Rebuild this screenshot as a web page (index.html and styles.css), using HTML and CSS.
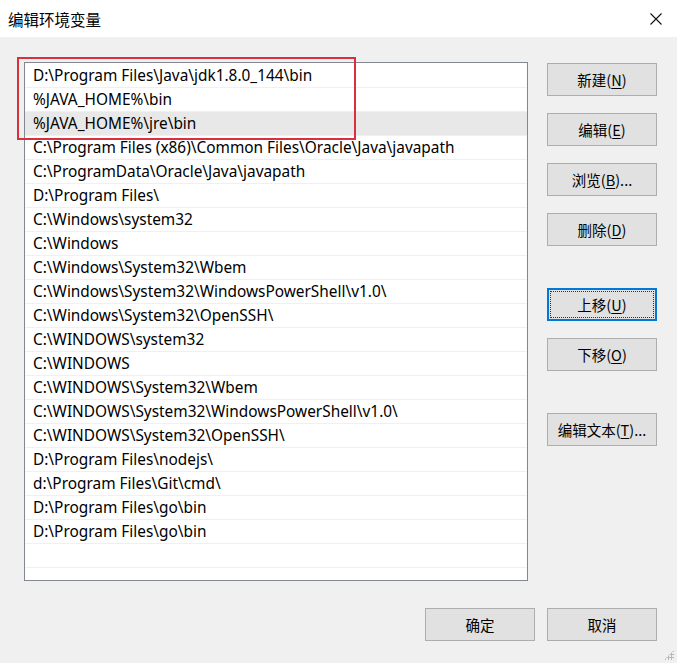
FILE: index.html
```html
<!DOCTYPE html>
<html lang="zh-CN">
<head>
  <meta charset="UTF-8">
  <title>编辑环境变量</title>
  <link rel="stylesheet" href="styles.css">
</head>
<body>
  <div class="dialog">
    <!-- Title bar -->
    <div class="title-bar">
      <span class="title">编辑环境变量</span>
      <svg class="close-icon" width="12" height="12" viewBox="0 0 12 12">
        <path d="M0.5 0.5 L11.5 11.5 M11.5 0.5 L0.5 11.5" stroke="#111" stroke-width="1.1" fill="none"/>
      </svg>
    </div>

    <div class="dialog-body">
      <!-- Path list -->
      <div class="path-list">
        <div class="path-row">D:\Program Files\Java\jdk1.8.0_144\bin</div>
        <div class="path-row">%JAVA_HOME%\bin</div>
        <div class="path-row selected">%JAVA_HOME%\jre\bin</div>
        <div class="path-row">C:\Program Files (x86)\Common Files\Oracle\Java\javapath</div>
        <div class="path-row">C:\ProgramData\Oracle\Java\javapath</div>
        <div class="path-row">D:\Program Files\</div>
        <div class="path-row">C:\Windows\system32</div>
        <div class="path-row">C:\Windows</div>
        <div class="path-row">C:\Windows\System32\Wbem</div>
        <div class="path-row">C:\Windows\System32\WindowsPowerShell\v1.0\</div>
        <div class="path-row">C:\Windows\System32\OpenSSH\</div>
        <div class="path-row">C:\WINDOWS\system32</div>
        <div class="path-row">C:\WINDOWS</div>
        <div class="path-row">C:\WINDOWS\System32\Wbem</div>
        <div class="path-row">C:\WINDOWS\System32\WindowsPowerShell\v1.0\</div>
        <div class="path-row">C:\WINDOWS\System32\OpenSSH\</div>
        <div class="path-row">D:\Program Files\nodejs\</div>
        <div class="path-row">d:\Program Files\Git\cmd\</div>
        <div class="path-row">D:\Program Files\go\bin</div>
        <div class="path-row">D:\Program Files\go\bin</div>
        <div class="path-row"></div>
        <div class="path-row"></div>
      </div>

      <!-- Side actions -->
      <div class="side-actions">
        <div class="btn-group">
          <button class="btn">新建(<u>N</u>)</button>
          <button class="btn">编辑(<u>E</u>)</button>
          <button class="btn">浏览(<u>B</u>)...</button>
          <button class="btn">删除(<u>D</u>)</button>
        </div>
        <div class="btn-group">
          <button class="btn focused"><span class="focus-ring">上移(<u>U</u>)</span></button>
          <button class="btn">下移(<u>O</u>)</button>
        </div>
        <div class="btn-group">
          <button class="btn">编辑文本(<u>T</u>)...</button>
        </div>
      </div>
    </div>

    <!-- Footer -->
    <div class="dialog-footer">
      <button class="btn">确定</button>
      <button class="btn">取消</button>
    </div>

    <div class="annotation"></div>
    <div class="resize-grip"></div>
  </div>
</body>
</html>
```

FILE: styles.css
```css
* {
  margin: 0;
  padding: 0;
  box-sizing: border-box;
}

body {
  font-family: "Noto Sans", "Noto Sans CJK SC", sans-serif;
  font-size: 15px;
  color: #000;
  background-color: #f0f0f0;
}

.dialog {
  position: relative;
  width: 677px;
  height: 663px;
  background-color: #f0f0f0;
}

/* Title bar */
.title-bar {
  height: 37px;
  background-color: #fff;
  display: flex;
  align-items: center;
  justify-content: space-between;
  padding: 0 15px 0 8px;
}

.title {
  font-family: "Noto Sans CJK SC", sans-serif;
  font-size: 15.5px;
  color: #000;
}

/* Body */
.dialog-body {
  display: flex;
  gap: 19px;
  padding: 25px 20px 0 24px;
}

.path-list {
  width: 504px;
  height: 519px;
  background-color: #fff;
  border: 1px solid #828790;
  padding-top: 1px;
  overflow: hidden;
}

.path-row {
  height: 24px;
  line-height: 24px;
  padding-left: 8px;
  border-bottom: 1px solid #f0f0f0;
  white-space: nowrap;
  overflow: hidden;
  font-size: 15.4px;
}

.path-row.selected {
  background-color: #e8e8e8;
}

.side-actions {
  display: flex;
  flex-direction: column;
  gap: 42px;
  padding-top: 1px;
}

.btn-group {
  display: flex;
  flex-direction: column;
  gap: 17px;
}

.btn {
  width: 110px;
  height: 33px;
  background-color: #e1e1e1;
  border: 1px solid #adadad;
  font-family: "Noto Sans CJK SC", sans-serif;
  font-size: 14.5px;
  color: #000;
  display: flex;
  align-items: center;
  justify-content: center;
}

.btn u {
  text-underline-offset: 2px;
}

.btn.focused {
  border: 2px solid #0078d7;
  padding: 1px;
}

.focus-ring {
  width: 100%;
  height: 100%;
  display: flex;
  align-items: center;
  justify-content: center;
  border: 1px dotted #333;
}

/* Footer */
.dialog-footer {
  display: flex;
  justify-content: flex-end;
  gap: 12px;
  padding: 27px 20px 0 0;
}

/* Red marker round the JAVA entries */
.annotation {
  position: absolute;
  left: 17px;
  top: 57px;
  width: 339px;
  height: 83px;
  border: 2px solid #d8303f;
}

.resize-grip {
  position: absolute;
  right: 3px;
  bottom: 3px;
  width: 10px;
  height: 10px;
  background-image: radial-gradient(circle, #b8b8b8 1px, transparent 1.2px);
  background-size: 3px 3px;
  clip-path: polygon(100% 0, 100% 100%, 0 100%);
}
```
